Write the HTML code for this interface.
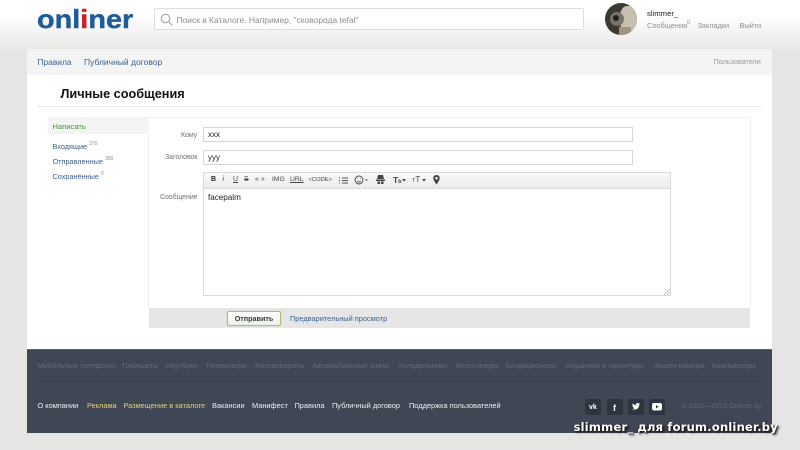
<!DOCTYPE html>
<html lang="ru"><head><meta charset="utf-8"><title>Личные сообщения</title>
<style>
html,body{margin:0;padding:0}
body{width:800px;height:450px;overflow:hidden;position:relative;background:#e5e5e3;font-family:"Liberation Sans","Noto Sans CJK SC",sans-serif}
.a{position:absolute;white-space:nowrap}
.t{position:absolute;white-space:nowrap;line-height:12px}
sup{font-size:5px;vertical-align:baseline;position:relative;top:-4px;color:#8a8a8a}
.b{color:#3b5f8f}
.box{position:absolute;background:#fff;border:1px solid #dcdcdc;box-sizing:border-box}
.f1{color:#646a75;font-size:7.4px}
.f2{color:#eef0f3;font-size:7.4px}
.y{color:#e6d27a}
.soc{position:absolute;top:399px;width:16px;height:16px;background:#2e3541;border-radius:2px}
.tb{position:absolute;top:175px;line-height:10px;white-space:nowrap;font-size:7px;color:#444}
.l{font-size:6.9px;color:#707070}
.s{font-size:7.3px}
</style></head><body>
<div class="a" style="left:0;top:0;width:800px;height:50px;background:linear-gradient(#fff 0,#fff 14px,#e8e8e7 50px)"></div>

<div class="t" style="left:37px;top:4px;font:bold 26px/30px 'Liberation Sans',sans-serif;color:#1e5c9c;transform:scaleX(1.11);transform-origin:0 0;-webkit-text-stroke:.4px #1e5c9c">onl<span style="color:#c8202c;-webkit-text-stroke:.4px #c8202c">i</span>ner</div>

<div class="box" style="left:154px;top:8px;width:430px;height:22px;border-color:#dedede;border-radius:2px"></div>
<svg class="a" style="left:160px;top:13px" width="13" height="13" viewBox="0 0 13 13" fill="none" stroke="#a5a5a5" stroke-width="1.1"><circle cx="5.5" cy="5.5" r="4.2"/><path d="M8.5 8.5L12.3 12.3"/></svg>
<div class="t" style="left:176.500px;top:13.500px;font-size:8.450px;color:#8c8c8c">Поиск в Каталоге. Например, "сковорода tefal"</div>

<div class="a" style="left:605px;top:3px;width:32px;height:32px;border-radius:50%;overflow:hidden;background:#3d3832">
<div class="a" style="left:15px;top:3px;width:17px;height:26px;background:#c9bfb0;border-radius:40%"></div>
<div class="a" style="left:5px;top:9px;width:14px;height:14px;background:#77736b;border-radius:50%"></div>
<div class="a" style="left:8px;top:12px;width:6px;height:6px;background:#23211e;border-radius:50%"></div>
<div class="a" style="left:14px;top:24px;width:12px;height:8px;background:#a09584"></div>
</div>
<div class="t" style="left:647px;top:8px;font-size:7.700px;color:#222">slimmer_</div>
<div class="t" style="left:647px;top:19.500px;font-size:7.400px;color:#8f8f8f">Сообщения<sup>0</sup></div>
<div class="t" style="left:697.500px;top:19.500px;font-size:7.300px;color:#8f8f8f">Закладки</div>
<div class="t" style="left:739.500px;top:19.500px;font-size:7.300px;color:#8f8f8f">Выйти</div>

<div class="a" style="left:27px;top:49px;width:745px;height:300px;background:#fff"></div>
<div class="a" style="left:27px;top:49px;width:745px;height:26px;background:#f4f4f4"></div>
<div class="t b" style="left:37.500px;top:56px;font-size:8.400px">Правила</div>
<div class="t b" style="left:84px;top:56px;font-size:8.500px">Публичный договор</div>
<div class="t" style="left:713.500px;top:56px;font-size:7.250px;color:#9a9a9a">Пользователи</div>

<div class="t" style="left:60.500px;top:87px;font:bold 12.700px/14px 'Liberation Sans',sans-serif;color:#111">Личные сообщения</div>
<div class="a" style="left:37px;top:106px;width:724px;height:1px;background:#e8e8e8"></div>

<div class="a" style="left:48px;top:117px;width:702px;height:1px;background:#f1f1f1"></div>
<div class="a" style="left:48px;top:117px;width:101px;height:17px;background:#f3f4f3"></div>
<div class="a" style="left:148px;top:134px;width:1px;height:174px;background:#eeeeee"></div>
<div class="a" style="left:750px;top:118px;width:1px;height:190px;background:#f0f0f0"></div>
<div class="t" style="left:52.500px;top:120.500px;font-size:7.600px;color:#4f8f3a">Написать</div>
<div class="t b s" style="left:52.500px;top:141px">Входящие <sup>370</sup></div>
<div class="t b s" style="left:52.500px;top:156px">Отправленные <sup>350</sup></div>
<div class="t b s" style="left:52.500px;top:171px">Сохранённые <sup>0</sup></div>

<div class="t l" style="left:181px;top:130px">Кому</div>
<div class="box" style="left:203px;top:127px;width:430px;height:15px;border-color:#d6d6d6"></div>
<div class="t" style="left:208px;top:129px;font-size:8px;color:#222">xxx</div>
<div class="t l" style="left:165px;top:152px">Заголовок</div>
<div class="box" style="left:203px;top:150px;width:430px;height:15px;border-color:#d6d6d6"></div>
<div class="t" style="left:208px;top:152px;font-size:8px;color:#222">yyy</div>
<div class="t l" style="left:160px;top:192px">Сообщение</div>

<div class="box" style="left:203px;top:172px;width:468px;height:124px;border-color:#dadada"></div>
<div class="a" style="left:204px;top:173px;width:466px;height:15px;background:linear-gradient(#f9f9f9,#ececec);border-bottom:1px solid #dcdcdc"></div>
<div class="tb" style="left:211px;font-weight:bold;color:#222">B</div>
<div class="tb" style="left:222.500px;font-style:italic">i</div>
<div class="tb" style="left:233px;text-decoration:underline">U</div>
<div class="tb" style="left:244px;text-decoration:line-through">S</div>
<div class="tb" style="left:255px">«&nbsp;»</div>
<div class="tb" style="left:272px;font-size:6.800px">IMG</div>
<div class="tb" style="left:290px;font-size:6.800px;text-decoration:underline">URL</div>
<div class="tb" style="left:308.500px;font-size:5.800px">&lt;CODE&gt;</div>
<svg class="a" style="left:339px;top:177px" width="9" height="7" stroke="#555" stroke-width="1"><path d="M0 1h1M3 1h6M0 3.500h1M3 3.500h6M0 6h1M3 6h6"/></svg>
<svg class="a" style="left:354px;top:175px" width="15" height="10" fill="none" stroke="#444" stroke-width=".9"><circle cx="5" cy="5" r="4"/><path d="M3 6.200q2 1.600 4 0M3.500 3.500v.6M6.500 3.500v.6"/><path d="M11 4.500h3l-1.500 1.500z" fill="#444" stroke="none"/></svg>
<svg class="a" style="left:376px;top:175px" width="9" height="10" fill="#444"><path d="M2 0h5l1 4H1zM0 4.500h9V6H0zM1.500 6.500h2.500V9h-2.500zM5 6.500h2.500V9H5z"/></svg>
<div class="tb" style="left:393px;font-weight:bold;font-size:8.500px">T<span style="font-size:5.500px">b</span></div>
<svg class="a" style="left:402px;top:179px" width="4" height="3" fill="#444"><path d="M0 0h4L2 2.500z"/></svg>
<div class="tb" style="left:412px;font-size:8px"><span style="font-size:5.500px">T</span>T</div>
<svg class="a" style="left:422px;top:179px" width="4" height="3" fill="#444"><path d="M0 0h4L2 2.500z"/></svg>
<svg class="a" style="left:433px;top:175px" width="7" height="10" fill="#444"><path d="M3.500 0C1.500 0 .3 1.400.3 3.200c0 2 3.200 6.300 3.200 6.300s3.200-4.300 3.200-6.300C6.700 1.400 5.500 0 3.500 0zm0 4.500a1.300 1.300 0 110-2.600 1.300 1.300 0 010 2.600z"/></svg>
<div class="t" style="left:208px;top:192px;font-size:8.100px;color:#222">facepalm</div>
<svg class="a" style="left:664px;top:289px" width="6" height="6" stroke="#bbb" stroke-width=".8"><path d="M0 6L6 0M3 6L6 3"/></svg>

<div class="a" style="left:149px;top:308px;width:601px;height:20px;background:#e6e6e6"></div>
<div class="a" style="left:227px;top:311px;width:54px;height:15px;box-sizing:border-box;background:linear-gradient(#fff,#efefef);border:1px solid #a4c266;border-radius:2px;box-shadow:0 0 1px #b7cf86;text-align:center;font-size:7.200px;font-weight:bold;line-height:13px;color:#30402a">Отправить</div>
<div class="t b" style="left:290px;top:313px;font-size:7.400px">Предварительный просмотр</div>

<div class="a" style="left:27px;top:349px;width:745px;height:84px;background:#3f4654;border-top:1px solid #5a6070;box-sizing:border-box"></div>
<div class="t f1" style="left:37.500px;top:359.500px">Мобильные телефоны</div>
<div class="t f1" style="left:122px;top:359.500px">Планшеты</div>
<div class="t f1" style="left:165.500px;top:359.500px">Ноутбуки</div>
<div class="t f1" style="left:205.500px;top:359.500px">Телевизоры</div>
<div class="t f1" style="left:254.500px;top:359.500px">Фотоаппараты</div>
<div class="t f1" style="left:312.500px;top:359.500px">Автомобильные шины</div>
<div class="t f1" style="left:398px;top:359.500px">Холодильники</div>
<div class="t f1" style="left:456px;top:359.500px">Велосипеды</div>
<div class="t f1" style="left:505.500px;top:359.500px">Кондиционеры</div>
<div class="t f1" style="left:565.500px;top:359.500px">Наушники и гарнитуры</div>
<div class="t f1" style="left:653.500px;top:359.500px">Экшен-камеры</div>
<div class="t f1" style="left:712px;top:359.500px;width:48px;overflow:hidden">Компьютеры</div>
<div class="a" style="left:37px;top:381px;width:724px;height:1px;background:#353c48"></div>

<div class="t f2" style="left:37.500px;top:400px">О компании</div>
<div class="t f2 y" style="left:87px;top:400px">Реклама</div>
<div class="t f2 y" style="left:123.500px;top:400px">Размещение в каталоге</div>
<div class="t f2" style="left:212px;top:400px">Вакансии</div>
<div class="t f2" style="left:252px;top:400px">Манифест</div>
<div class="t f2" style="left:294.500px;top:400px">Правила</div>
<div class="t f2" style="left:332px;top:400px">Публичный договор</div>
<div class="t f2" style="left:409px;top:400px">Поддержка пользователей</div>

<div class="soc" style="left:585px"></div><div class="soc" style="left:607px"></div><div class="soc" style="left:628px"></div><div class="soc" style="left:649px"></div>
<div class="t" style="left:589px;top:401.500px;font:bold 7px/12px 'Liberation Sans',sans-serif;color:#fff">vk</div>
<div class="t" style="left:613px;top:401.500px;font:bold 9px/12px 'Liberation Sans',sans-serif;color:#fff">f</div>
<svg class="a" style="left:632px;top:403px" width="8" height="7" fill="#fff"><path d="M8 .9c-.3.1-.6.2-.9.3.3-.2.6-.5.7-.9-.3.2-.7.300-1 .4A1.600 1.600 0 004 2.200C2.700 2.100 1.500 1.500.6.500.2 1.300.400 2.200 1.100 2.700c-.3 0-.5-.1-.7-.2 0 .8.500 1.400 1.300 1.600-.2.100-.5.100-.7 0 .2.600.8 1.100 1.500 1.100C2.200 5.700 1.100 6 0 5.900 2.800 7.600 7.300 6 7.200 1.700c.3-.2.600-.5.800-.8z"/></svg>
<svg class="a" style="left:652px;top:403px" width="11" height="8"><rect width="10" height="7.500" rx="2" fill="#fff"/><path d="M4 2l2.500 1.700L4 5.400z" fill="#2e3541"/></svg>
<div class="t" style="left:681px;top:400px;font-size:7.200px;color:#5d6472">© 2001—2016 Onliner.by</div>

<div class="t" style="left:573.500px;top:420px;font:bold 11.700px/15px 'DejaVu Sans','Liberation Sans',sans-serif;color:#fff;text-shadow:1px 1px 1px #222,2px 2px 2px rgba(0,0,0,.6),-1px 0 1px rgba(0,0,0,.4);letter-spacing:.1px">slimmer_ для forum.onliner.by</div>
</body></html>
